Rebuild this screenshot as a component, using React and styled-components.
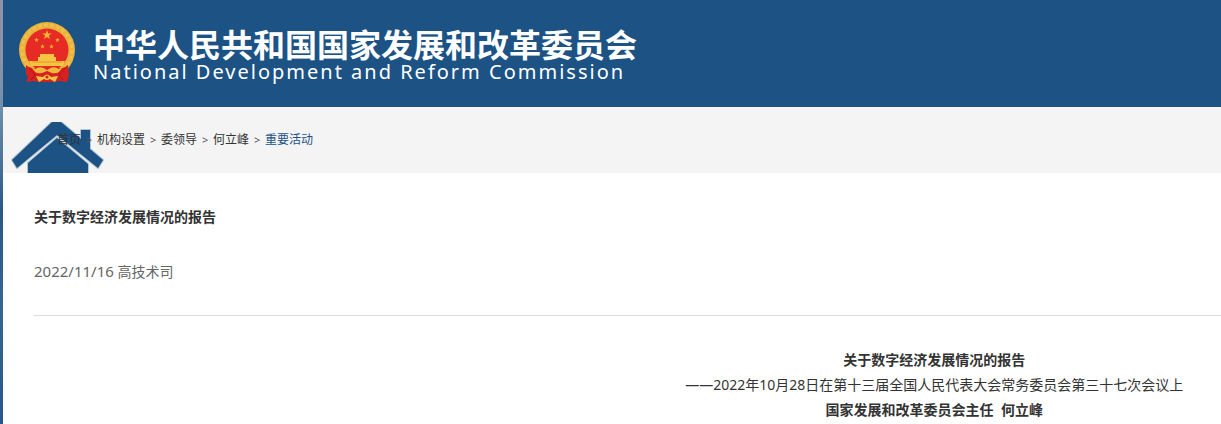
import React from "react";
import styled, { createGlobalStyle } from "styled-components";

const GlobalStyle = createGlobalStyle`
  * { box-sizing: border-box; }
  body {
    margin: 0;
    background: #fff;
    color: #333;
    font-family: "Noto Sans", "Noto Sans CJK SC", sans-serif;
    font-size: 14px;
    line-height: 25px;
  }
`;

const Page = styled.div`
  min-height: 100vh;
  display: grid;
  grid-template-columns: 3px minmax(0, 1fr);
`;

const Edge = styled.div`
  background: linear-gradient(#9092a8 0%, #8b93ab 15%, #7090aa 25%, #2a5787 50%, #376592 72%, #28568a 100%);
`;

const Header = styled.header`
  background: #1c5284;
  color: #fff;
  height: 107px;
  padding: 22px 16px 0;
  display: flex;
  gap: 18px;
`;

const Emblem = styled.svg`
  flex: none;
  width: 56px;
  height: 61px;
`;

const Brand = styled.div`
  padding-top: 3px;
  white-space: nowrap;
`;

const BrandName = styled.h1`
  margin: 0;
  font-family: "Noto Sans CJK SC", sans-serif;
  font-size: 32px;
  line-height: 36px;
  font-weight: 700;
`;

const BrandEnglish = styled.p`
  margin: 0;
  font-size: 20px;
  line-height: 22px;
  letter-spacing: 2px;
`;

const Trail = styled.nav`
  position: relative;
  overflow: hidden;
  height: 66px;
  padding: 20px 0 0 54px;
  background: #f4f4f4;
  font-size: 12px;
  line-height: 25px;
`;

const HouseIcon = styled.svg`
  position: absolute;
  left: 8px;
  bottom: 0;
  width: 93px;
  height: 51px;
`;

const TrailList = styled.ol`
  position: relative;
  display: flex;
  margin: 0;
  padding: 0;
  list-style: none;
`;

const TrailItem = styled.li`
  display: flex;

  & + &::before {
    content: ">";
    width: 16px;
    text-align: center;
    font-size: 11px;
    color: #555;
  }
`;

const TrailLink = styled.a`
  color: ${(p) => (p.$current ? "#1c5284" : "#333")};
  text-decoration: none;
`;

const Article = styled.article`
  padding: 31px 0 0 31px;
`;

const ArticleTitle = styled.h2`
  margin: 0 0 30px;
  font-size: 14px;
  line-height: 25px;
  font-weight: 700;
`;

const Meta = styled.p`
  margin: 0;
  padding-bottom: 31px;
  color: #666;
  border-bottom: 1px solid #ddd;
`;

const DateText = styled.time`
  font-size: 15px;
  line-height: 1;
`;

const Report = styled.div`
  padding: 31px 0 0 calc(50% + 20px);
  text-align: center;
  white-space: nowrap;
`;

const Line = styled.p`
  margin: 0;
  font-weight: ${(p) => (p.$strong ? 700 : 400)};
  white-space: pre;
`;

const trail = ["首页", "机构设置", "委领导", "何立峰", "重要活动"];

const Star = ({ x, y, r }) => (
  <path
    transform={`translate(${x} ${y}) scale(${r})`}
    d="M0-1 .24-.32.95-.31.38.12.59.81 0 .4-.59.81-.38.12-.95-.31-.24-.32Z"
    fill="#f2b632"
  />
);

function NationalEmblem() {
  return (
    <Emblem viewBox="0 0 56 61" aria-hidden="true">
      <circle cx="28" cy="28" r="28" fill="#e9b23c" />
      <circle cx="28" cy="28" r="25" fill="none" stroke="#f3c650" strokeWidth="3" strokeDasharray="4 2" strokeOpacity=".7" />
      <circle cx="28" cy="28" r="21.5" fill="#e52b24" />
      <Star x="28" y="13" r="5" />
      <Star x="17.5" y="18" r="2.5" />
      <Star x="38.5" y="18" r="2.5" />
      <Star x="23.5" y="24.5" r="2.5" />
      <Star x="32.5" y="24.5" r="2.5" />
      <path d="M21 32h14v3h2v4h9l-2 5H12l-2-5h9v-4h2Z" fill="#f5c443" />
      <path d="M13 40h30" stroke="#e0952f" strokeWidth="1" />
      <path d="M7 43c4 4 9 3 13 3h16c4 0 9 1 13-3l1 10-2 7-7-1-6 1H20l-6-1-7 1 2-5-2-3Z" fill="#d8221f" />
      <path d="M10 46 16 53 12 58M46 46 40 53 44 58" fill="none" stroke="#ad171b" strokeWidth="1" />
      <path d="M16 47q6-4 12 1 6-5 12-1l4-3q-4 9-11 7l-5-2-5 2q-7 2-11-7Z" fill="#f0b93e" />
      <path d="m17 54 7 1q4-5 8 0l7-1-3 6-5-3q-3 2-6 0l-5 3Z" fill="#f5c24a" />
      <circle cx="28" cy="55" r="1.5" fill="#d8221f" />
    </Emblem>
  );
}

export default function App() {
  return (
    <Page>
      <GlobalStyle />
      <Edge />
      <div lang="zh-CN">
        <Header>
          <NationalEmblem />
          <Brand>
            <BrandName>中华人民共和国国家发展和改革委员会</BrandName>
            <BrandEnglish lang="en">National Development and Reform Commission</BrandEnglish>
          </Brand>
        </Header>
        <Trail aria-label="当前位置">
          <HouseIcon viewBox="0 0 93 51" aria-hidden="true">
            <g fill="#1c5284" stroke="#1c5284" strokeWidth="2" strokeOpacity=".3" strokeLinejoin="round">
              <path d="M1 38 41 0h9l20 17V8h9v19l13 11-5 8L46 13 6 46Z" />
              <path d="M46 16 77 42v11H17V41Z" />
            </g>
          </HouseIcon>
          <TrailList>
            {trail.map((name, i) => (
              <TrailItem key={name}>
                <TrailLink href="#" $current={i === trail.length - 1}>
                  {name}
                </TrailLink>
              </TrailItem>
            ))}
          </TrailList>
        </Trail>
        <Article>
          <ArticleTitle>关于数字经济发展情况的报告</ArticleTitle>
          <Meta>
            <DateText dateTime="2022-11-16">2022/11/16</DateText> 高技术司
          </Meta>
          <Report>
            <Line $strong>关于数字经济发展情况的报告</Line>
            <Line>——2022年10月28日在第十三届全国人民代表大会常务委员会第三十七次会议上</Line>
            <Line $strong>国家发展和改革委员会主任{"  "}何立峰</Line>
          </Report>
        </Article>
      </div>
    </Page>
  );
}
